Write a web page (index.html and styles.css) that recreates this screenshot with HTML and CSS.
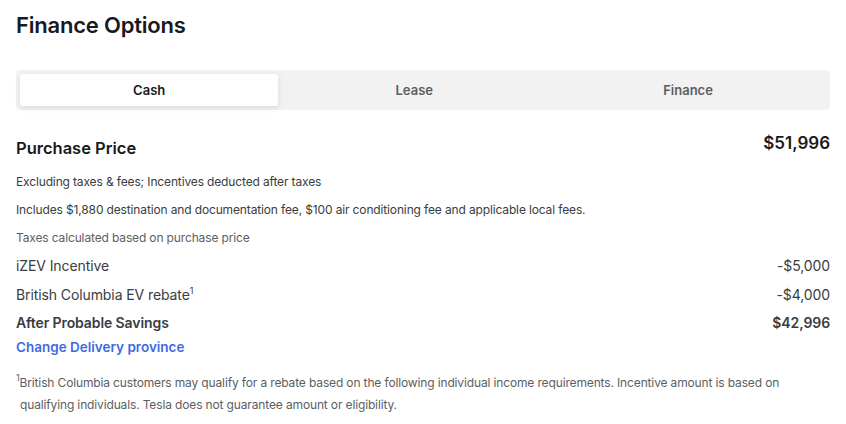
FILE: index.html
```html
<!DOCTYPE html>
<html>
<head>
<meta charset="utf-8">
<link rel="stylesheet" href="styles.css">
</head>
<body>
<div class="page">
  <h1 class="title">Finance Options</h1>
  <div class="tabs">
    <div class="tab active">Cash</div>
    <div class="tab">Lease</div>
    <div class="tab">Finance</div>
  </div>
  <div class="price-row">
    <h2 class="price-label">Purchase Price</h2>
    <div class="price-value">$51,996</div>
  </div>
  <div class="notes">
    <p class="note">Excluding taxes &amp; fees; Incentives deducted after taxes</p>
    <p class="note">Includes $1,880 destination and documentation fee, $100 air conditioning fee and applicable local fees.</p>
    <p class="note muted">Taxes calculated based on purchase price</p>
  </div>
  <div class="line-items">
    <div class="item"><span>iZEV Incentive</span><span>-$5,000</span></div>
    <div class="item"><span>British Columbia EV rebate<sup class="sup">1</sup></span><span>-$4,000</span></div>
    <div class="item total"><span>After Probable Savings</span><span>$42,996</span></div>
  </div>
  <a class="link" href="#">Change Delivery province</a>
  <p class="footnote"><sup class="fn-sup">1</sup>British Columbia customers may qualify for a rebate based on the following individual income requirements. Incentive amount is based on qualifying individuals. Tesla does not guarantee amount or eligibility.</p>
</div>
</body>
</html>
```
FILE: styles.css
```css
* { box-sizing: border-box; }
body {
  margin: 0;
  background: #fff;
  font-family: Inter, "Noto Sans", sans-serif;
  color: #393c41;
}
.page {
  padding: 10px 16px 0 16px;
}
.title {
  margin: 0;
  font-size: 22px;
  line-height: 30px;
  font-weight: 600;
  color: #171a20;
  letter-spacing: -0.2px;
}
.tabs {
  margin-top: 30px;
  display: flex;
  gap: 4px;
  padding: 4px;
  background: #f2f2f2;
  border-radius: 4px;
  height: 40px;
}
.tab {
  flex: 1 1 auto;
  display: flex;
  align-items: center;
  justify-content: center;
  font-size: 13px;
  font-weight: 600;
  color: #5c5e62;
  border-radius: 3px;
}
.tab.active {
  background: #fff;
  color: #171a20;
  box-shadow: 0 2px 6px rgba(0,0,0,0.1);
}
.price-row {
  margin-top: 26px;
  display: flex;
  justify-content: space-between;
  align-items: flex-start;
}
.price-label {
  margin: 0;
  font-size: 16.5px;
  line-height: 24px;
  font-weight: 600;
  color: #171a20;
}
.price-value {
  margin-top: -5px;
  font-size: 17px;
  line-height: 24px;
  font-weight: 600;
  color: #171a20;
}
.notes {
  margin-top: 8px;
}
.note {
  margin: 0;
  font-size: 12px;
  line-height: 28px;
  letter-spacing: -0.14px;
  color: #393c41;
}
.note.muted {
  color: #5c5e62;
}
.item {
  display: flex;
  justify-content: space-between;
  font-size: 14px;
  line-height: 28.5px;
  letter-spacing: -0.1px;
  color: #393c41;
}
.item.total {
  font-weight: 600;
}
.sup {
  font-size: 9px;
  vertical-align: 6px;
  line-height: 0;
}
.link {
  display: block;
  margin-top: -3px;
  font-size: 13.5px;
  line-height: 24px;
  font-weight: 600;
  color: #3e6ae1;
  text-decoration: none;
}
.footnote {
  margin: 13px 0 0 0;
  padding-left: 4px;
  font-size: 12px;
  line-height: 22px;
  letter-spacing: -0.14px;
  color: #5c5e62;
}
.fn-sup {
  margin-left: -4px;
  font-size: 9px;
  vertical-align: 6px;
  line-height: 0;
}
```
